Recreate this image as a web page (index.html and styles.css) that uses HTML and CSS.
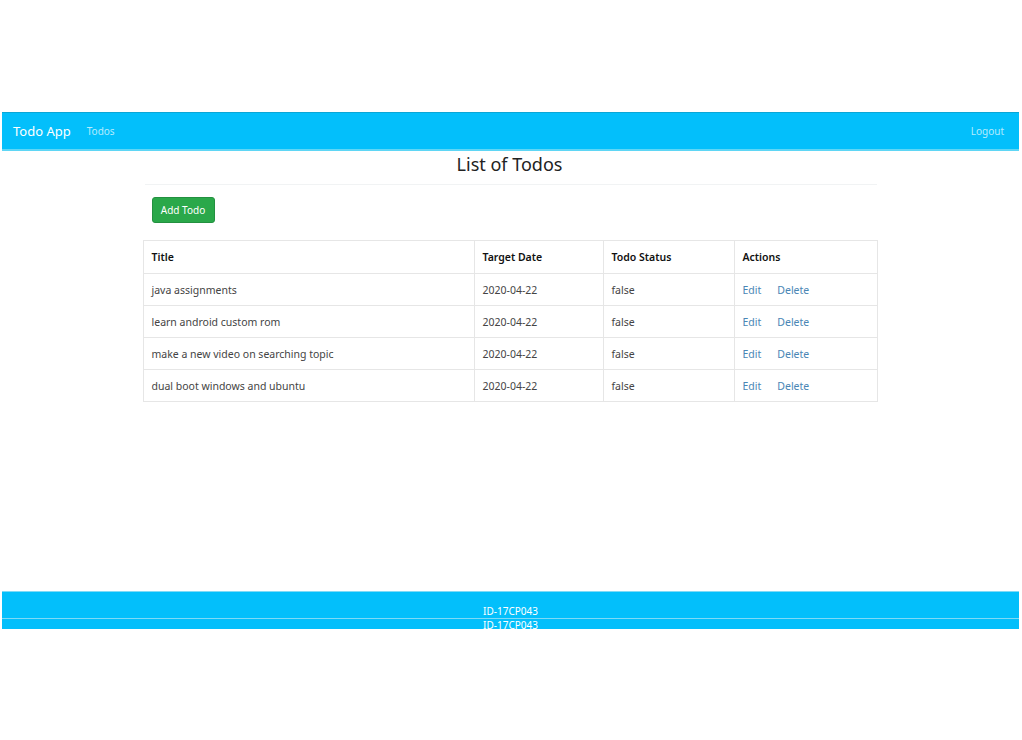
FILE: index.html
```html
<!DOCTYPE html>
<html>
<head>
<meta charset="utf-8">
<link rel="stylesheet" href="styles.css">
</head>
<body>
<div class="page">
  <header class="navbar">
    <div class="nav-left">
      <span class="brand">Todo App</span>
      <a class="nav-link">Todos</a>
    </div>
    <a class="nav-link">Logout</a>
  </header>
  <main class="main">
    <div class="container">
      <h1 class="title">List of Todos</h1>
      <div class="rule"></div>
      <div class="actions-bar"><button class="btn-add">Add Todo</button></div>
      <table class="todos">
        <thead>
          <tr><th class="c1">Title</th><th class="c2">Target Date</th><th class="c3">Todo Status</th><th class="c4">Actions</th></tr>
        </thead>
        <tbody>
          <tr><td>java assignments</td><td>2020-04-22</td><td>false</td><td><a class="act">Edit</a><a class="act">Delete</a></td></tr>
          <tr><td>learn android custom rom</td><td>2020-04-22</td><td>false</td><td><a class="act">Edit</a><a class="act">Delete</a></td></tr>
          <tr><td>make a new video on searching topic</td><td>2020-04-22</td><td>false</td><td><a class="act">Edit</a><a class="act">Delete</a></td></tr>
          <tr><td>dual boot windows and ubuntu</td><td>2020-04-22</td><td>false</td><td><a class="act">Edit</a><a class="act">Delete</a></td></tr>
        </tbody>
      </table>
    </div>
  </main>
  <footer class="footer">
    <div class="foot-top"><span>ID-17CP043</span></div>
    <div class="foot-bottom"><span>ID-17CP043</span></div>
  </footer>
</div>
</body>
</html>
```
FILE: styles.css
```css
html, body {
  margin: 0;
  padding: 0;
  background: #ffffff;
}
body {
  font-family: "Noto Sans", "Open Sans", sans-serif;
  color: #222;
}
.page {
  padding: 112px 3px 0 2px;
}
.navbar {
  height: 39px;
  box-sizing: border-box;
  background: #03bffb;
  border-top: 1px solid #0aa6d6;
  border-bottom: 2px solid #5fd6f5;
  display: flex;
  align-items: center;
  justify-content: space-between;
  padding: 0 15px 0 11px;
}
.nav-left {
  display: flex;
  align-items: center;
  gap: 16px;
}
.brand {
  color: #ffffff;
  font-size: 13px;
}
.nav-link {
  color: #b5ebfd;
  font-size: 10px;
}
.main {
  height: 440px;
}
.container {
  width: 734px;
  margin: 0 auto;
  position: relative;
  left: -1px;
}
.title {
  margin: 0;
  font-size: 18px;
  font-weight: 400;
  text-align: center;
  color: #222;
  line-height: 26px;
}
.rule {
  margin: 7px 0 0 2px;
  border-top: 1px solid #f1f3f4;
}
.actions-bar {
  padding: 12px 0 0 9px;
  height: 55px;
  box-sizing: border-box;
}
.btn-add {
  height: 26px;
  width: 63px;
  background: #2aa84a;
  color: #fff;
  border: 1px solid #239140;
  border-radius: 3px;
  font-family: inherit;
  font-size: 10px;
  padding: 0;
}
.todos {
  width: 734px;
  border-collapse: collapse;
  table-layout: fixed;
  font-size: 10.5px;
  color: #444;
}
.todos th, .todos td {
  border: 1px solid #e6e6e6;
  text-align: left;
  padding: 0 8px;
  height: 32px;
  box-sizing: border-box;
}
.todos th {
  font-weight: 600;
  color: #111;
  height: 33px;
}
.c1 { width: 331px; }
.c2 { width: 129px; }
.c3 { width: 131px; }
.c4 { width: 143px; }
.act {
  color: #4a86b5;
  margin-right: 16px;
}
.footer {
  background: #03bffb;
  color: #ffffff;
  font-size: 10px;
  text-align: center;
}
.foot-top {
  height: 27px;
  box-sizing: border-box;
  border-top: 1px solid #7fdaf6;
  display: flex;
  align-items: flex-end;
  justify-content: center;
  line-height: 12px;
  padding-bottom: 1px;
}
.foot-bottom {
  height: 10px;
  overflow: hidden;
  border-top: 1px solid #7fdaf6;
  line-height: 12px;
}
```
